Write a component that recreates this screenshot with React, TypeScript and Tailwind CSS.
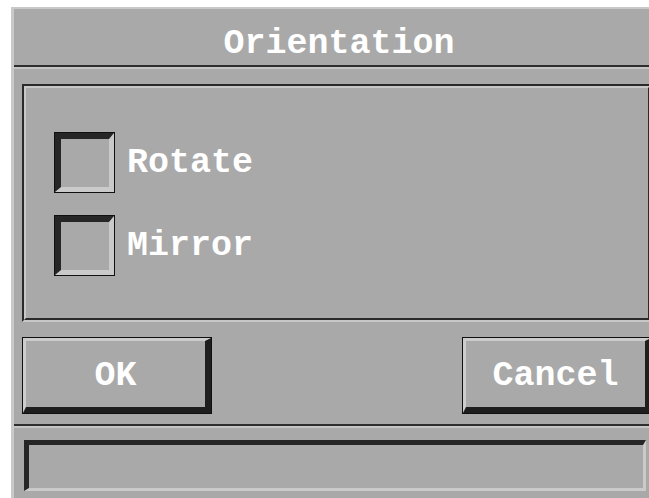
import React from "react";

const font = { fontFamily: '"Liberation Mono", "DejaVu Sans Mono", monospace' };

const CheckBox = ({ label }: { label: string }) => (
  <div className="flex items-center gap-[12px]">
    <div className="w-[61px] h-[61px] border border-[#101010]">
      <div className="w-full h-full bg-[#a8a9a8] border-t-[6px] border-l-[6px] border-b-[5px] border-r-[5px] border-t-[#262626] border-l-[#262626] border-b-[#c9cac9] border-r-[#c9cac9]" />
    </div>
    <span className="text-[35px] leading-[35px] font-bold text-white pt-[1px]">{label}</span>
  </div>
);

const Button = ({ label }: { label: string }) => (
  <div className="w-[190px] h-[77px] border border-[#101010]">
    <div className="w-full h-full flex items-center justify-center pt-[5px] border-t-[3px] border-l-[3px] border-b-[6px] border-r-[6px] border-t-[#cbcccb] border-l-[#cbcccb] border-b-[#1e1e1e] border-r-[#1e1e1e] text-[35px] leading-[35px] font-bold text-white">
      {label}
    </div>
  </div>
);

export default function App() {
  return (
    <div className="w-screen h-screen overflow-hidden bg-white pt-[7px] pl-[11px]" style={font}>
      <div className="w-[653px] h-[520px] bg-[#a8a9a8] border-t-2 border-l-[3px] border-[#c8c9c8] flex flex-col">
        {/* Title */}
        <div className="h-[58px] border-b-2 border-[#2e2e2e] pt-[18px] text-center text-[35px] leading-[35px] font-bold text-white">
          Orientation
        </div>
        <div className="h-[2px] bg-[#c4c5c4]" />

        <div className="pl-2 pr-3 pt-[15px]">
          {/* Options panel */}
          <div className="h-[238px] border-t-2 border-l-2 border-b-2 border-r-2 border-t-[#2a2a2a] border-l-[#2a2a2a] border-b-[#c6c7c6] border-r-[#c6c7c6]">
            <div className="h-full border-t-2 border-l-2 border-b-2 border-r-2 border-t-[#c6c7c6] border-l-[#c6c7c6] border-b-[#2a2a2a] border-r-[#2a2a2a] pt-[44px] pl-[28px] flex flex-col gap-[22px]">
              <CheckBox label="Rotate" />
              <CheckBox label="Mirror" />
            </div>
          </div>

          {/* Buttons */}
          <div className="mt-[15px] flex justify-between">
            <Button label="OK" />
            <Button label="Cancel" />
          </div>
        </div>

        {/* Separator */}
        <div className="mt-[10px] h-[2px] bg-[#2e2e2e]" />
        <div className="h-[2px] bg-[#c4c5c4]" />

        {/* Status field */}
        <div className="mt-[12px] ml-[10px] w-[622px] h-[51px] border-t-[5px] border-l-[5px] border-b-[3px] border-r-[3px] border-t-[#262626] border-l-[#262626] border-b-[#c9cac9] border-r-[#c9cac9]" />
      </div>
    </div>
  );
}
